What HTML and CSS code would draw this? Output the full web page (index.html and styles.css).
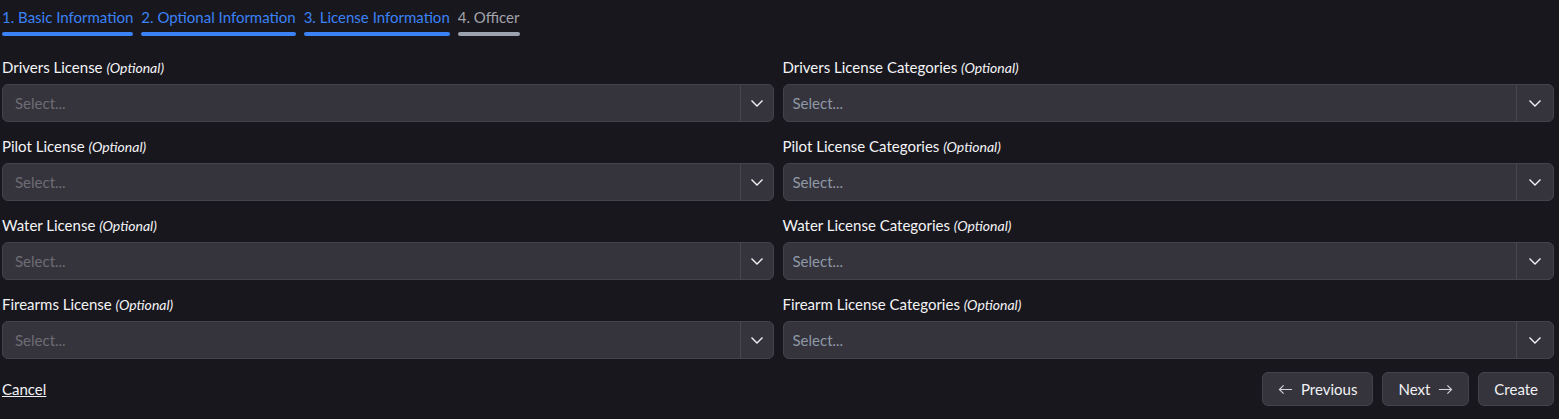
FILE: index.html
```html
<!DOCTYPE html>
<html lang="en">
<head>
<meta charset="utf-8">
<title>Create Citizen</title>
<link rel="stylesheet" href="styles.css">
</head>
<body>
<div class="wizard">
  <nav class="steps">
    <div class="step done"><span class="step-label">1. Basic Information</span><span class="bar"></span></div>
    <div class="step done"><span class="step-label">2. Optional Information</span><span class="bar"></span></div>
    <div class="step done"><span class="step-label">3. License Information</span><span class="bar"></span></div>
    <div class="step"><span class="step-label">4. Officer</span><span class="bar"></span></div>
  </nav>

  <div class="grid">
    <div class="field">
      <label class="label">Drivers License <em>(Optional)</em></label>
      <div class="select"><span class="placeholder">Select...</span><span class="indicator"><svg viewBox="0 0 16 16"><path d="M2.5 5.5 8 11l5.5-5.5"/></svg></span></div>
    </div>
    <div class="field">
      <label class="label">Drivers License Categories <em>(Optional)</em></label>
      <div class="select multi"><span class="placeholder">Select...</span><span class="indicator"><svg viewBox="0 0 16 16"><path d="M2.5 5.5 8 11l5.5-5.5"/></svg></span></div>
    </div>
    <div class="field">
      <label class="label">Pilot License <em>(Optional)</em></label>
      <div class="select"><span class="placeholder">Select...</span><span class="indicator"><svg viewBox="0 0 16 16"><path d="M2.5 5.5 8 11l5.5-5.5"/></svg></span></div>
    </div>
    <div class="field">
      <label class="label">Pilot License Categories <em>(Optional)</em></label>
      <div class="select multi"><span class="placeholder">Select...</span><span class="indicator"><svg viewBox="0 0 16 16"><path d="M2.5 5.5 8 11l5.5-5.5"/></svg></span></div>
    </div>
    <div class="field">
      <label class="label">Water License <em>(Optional)</em></label>
      <div class="select"><span class="placeholder">Select...</span><span class="indicator"><svg viewBox="0 0 16 16"><path d="M2.5 5.5 8 11l5.5-5.5"/></svg></span></div>
    </div>
    <div class="field">
      <label class="label">Water License Categories <em>(Optional)</em></label>
      <div class="select multi"><span class="placeholder">Select...</span><span class="indicator"><svg viewBox="0 0 16 16"><path d="M2.5 5.5 8 11l5.5-5.5"/></svg></span></div>
    </div>
    <div class="field">
      <label class="label">Firearms License <em>(Optional)</em></label>
      <div class="select"><span class="placeholder">Select...</span><span class="indicator"><svg viewBox="0 0 16 16"><path d="M2.5 5.5 8 11l5.5-5.5"/></svg></span></div>
    </div>
    <div class="field">
      <label class="label">Firearm License Categories <em>(Optional)</em></label>
      <div class="select multi"><span class="placeholder">Select...</span><span class="indicator"><svg viewBox="0 0 16 16"><path d="M2.5 5.5 8 11l5.5-5.5"/></svg></span></div>
    </div>
  </div>

  <footer class="footer">
    <a class="cancel" href="#">Cancel</a>
    <div class="actions">
      <button class="btn" type="button"><svg class="arrow" viewBox="0 0 16 16"><path d="M15 8H1.5M6 3.5 1.5 8 6 12.5"/></svg>Previous</button>
      <button class="btn" type="button">Next<svg class="arrow" viewBox="0 0 16 16"><path d="M1 8h13.5M10 3.5 14.5 8 10 12.5"/></svg></button>
      <button class="btn" type="button">Create</button>
    </div>
  </footer>
</div>
</body>
</html>
```

FILE: styles.css
```css
* { box-sizing: border-box; }

html, body {
  margin: 0;
  background: #18171d;
}

body {
  font-family: "Lato", "Noto Sans", sans-serif;
  font-size: 15px;
  color: #ececf0;
}

.wizard {
  padding: 0 5px 0 2px;
}

.steps {
  display: flex;
  gap: 8px;
  padding-top: 7px;
}

.step {
  display: flex;
  flex-direction: column;
}

.step-label {
  height: 20px;
  line-height: 20px;
  color: #a3a3ab;
}

.step.done .step-label {
  color: #3b82f6;
}

.bar {
  margin-top: 5px;
  height: 4px;
  border-radius: 2px;
  background: #9ca3af;
}

.step.done .bar {
  background: #3b82f6;
}

.grid {
  display: grid;
  grid-template-columns: 1fr 1fr;
  column-gap: 9px;
  row-gap: 15px;
  margin-top: 22px;
}

.field {
  display: flex;
  flex-direction: column;
}

.label {
  height: 20px;
  line-height: 19px;
  margin-bottom: 6px;
  color: #f4f4f7;
  white-space: nowrap;
}

.label em {
  font-size: 14px;
  font-style: italic;
  line-height: 1;
}

.select {
  display: flex;
  align-items: stretch;
  height: 38px;
  background: #35343c;
  border: 1px solid #44434b;
  border-radius: 6px;
}

.placeholder {
  flex: 1;
  display: flex;
  align-items: center;
  padding-left: 12px;
  color: #6d6c75;
}

.select.multi .placeholder {
  padding-left: 9px;
  color: #8e98a6;
}

.indicator {
  width: 33px;
  display: flex;
  align-items: center;
  justify-content: center;
  border-left: 1px solid #48474f;
}

.select.multi .indicator {
  width: 37px;
}

.indicator svg {
  width: 16px;
  height: 16px;
  fill: none;
  stroke: #f2f2f5;
  stroke-width: 1.4;
}

.footer {
  display: flex;
  justify-content: space-between;
  align-items: center;
  margin-top: 13px;
}

.cancel {
  color: #f2f2f5;
  text-decoration: underline;
}

.actions {
  display: flex;
  gap: 9px;
}

.btn {
  height: 34px;
  padding: 0 15px;
  background: #35343c;
  border: 1px solid #44434b;
  border-radius: 6px;
  color: #f2f2f5;
  font-family: inherit;
  font-size: 15px;
  display: flex;
  align-items: center;
  gap: 8px;
}

.arrow {
  width: 15px;
  height: 15px;
  fill: none;
  stroke: #d4d4da;
  stroke-width: 1.2;
}
```
